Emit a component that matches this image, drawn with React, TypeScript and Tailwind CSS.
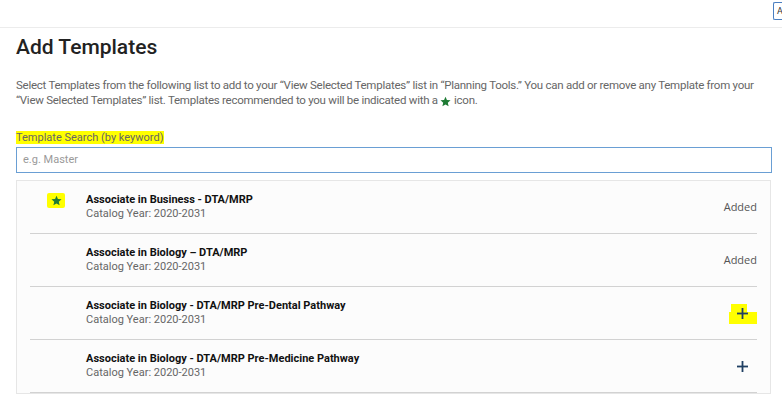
import React from "react";

const rows = [
  { title: "Associate in Business - DTA/MRP", star: true, status: "added" },
  { title: "Associate in Biology – DTA/MRP", star: false, status: "added" },
  { title: "Associate in Biology - DTA/MRP Pre-Dental Pathway", star: false, status: "plus-hl" },
  { title: "Associate in Biology - DTA/MRP Pre-Medicine Pathway", star: false, status: "plus" },
];

function Star() {
  return (
    <svg width="11" height="11" viewBox="0 0 24 24" className="inline-block">
      <path d="M12 1.5l3.1 7.2 7.9.7-6 5.2 1.8 7.7L12 18.3l-6.8 4 1.8-7.7-6-5.2 7.9-.7z" fill="#1e7b34" />
    </svg>
  );
}

function Plus() {
  return (
    <svg width="11" height="11" viewBox="0 0 11 11">
      <rect x="4.6" y="0" width="1.8" height="11" fill="#1f3f63" />
      <rect x="0" y="4.6" width="11" height="1.8" fill="#1f3f63" />
    </svg>
  );
}

export default function App() {
  return (
    <div className="w-[782px] h-[400px] overflow-hidden bg-white text-[#333]" style={{ fontFamily: "Roboto, 'Liberation Sans', sans-serif" }}>
      <div className="h-[28px] border-b border-[#ececec] flex justify-end items-start pt-[2px]">
        <div className="w-[9px] h-[18px] border-l border-y border-[#4a7fc1] rounded-l-[2px] overflow-hidden text-[9px] leading-[16px] pl-[3px] text-[#333]">A</div>
      </div>
      <div className="pl-4 pr-[10px]">
        <h1 className="mt-[7px] text-[21px] leading-[25px] font-medium text-[#222]">Add Templates</h1>
        <p className="mt-[18px] text-[11.5px] leading-[15px] text-[#666] tracking-[-0.26px]">
          Select Templates from the following list to add to your “View Selected Templates” list in “Planning Tools.” You can add or remove any Template from your “View Selected Templates” list. Templates recommended to you will be indicated with a{" "}
          <span className="inline-block align-[-1px]"><Star /></span> icon.
        </p>
        <div className="mt-[22px] text-[11px] leading-[14px] text-[#666]">
          <span className="bg-[#ffff00] pr-[1px]">Template Search (by keyword)</span>
        </div>
        <div className="mt-[2px] h-[26px] border border-[#6a9fd4] flex items-center px-[6px] text-[11px] text-[#9a9a9a]">
          e.g. Master
        </div>
        <div className="mt-[7px] mr-[1px] border border-[#e6e6e6] bg-[#fcfcfc] px-[13px]">
          {rows.map((r, i) => (
            <div key={i} className="h-[53px] border-b border-[#d2d2d2] flex items-center">
              <div className="w-[56px] self-start pt-[12px] flex justify-center">
                {r.star && (
                  <div className="bg-[#ffff00] w-[18px] h-[15px] rounded-[2px] flex items-center justify-center ml-[-4px]">
                    <Star />
                  </div>
                )}
              </div>
              <div className="flex-1 flex flex-col">
                <div className="text-[11px] leading-[14px] font-bold text-[#111]">{r.title}</div>
                <div className="text-[11px] leading-[14px] text-[#666]">Catalog Year: 2020-2031</div>
              </div>
              <div className="relative flex items-center justify-end">
                {r.status === "added" && (
                  <span className="text-[11px] text-[#555]" style={{ fontFamily: "'Open Sans', sans-serif" }}>Added</span>
                )}
                {r.status === "plus" && (
                  <span className="mr-[9px] flex"><Plus /></span>
                )}
                {r.status === "plus-hl" && (
                  <span className="mr-[9px] relative flex">
                    <span className="absolute left-[-6px] top-[-4px] w-[16px] h-[8px] bg-[#ffff00]" />
                    <span className="absolute left-[-8px] top-[4px] w-[28px] h-[12px] bg-[#ffff00]" />
                    <span className="relative flex"><Plus /></span>
                  </span>
                )}
              </div>
            </div>
          ))}
        </div>
      </div>
    </div>
  );
}
